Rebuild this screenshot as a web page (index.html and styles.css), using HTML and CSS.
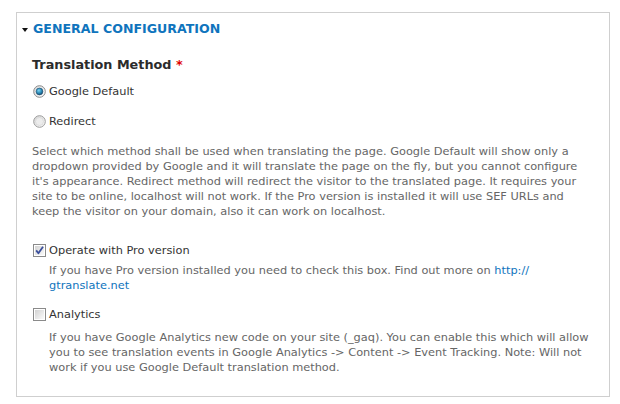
FILE: index.html
```html
<!DOCTYPE html>
<html lang="en">
<head>
<meta charset="utf-8">
<title>General configuration</title>
<link rel="stylesheet" href="styles.css">
</head>
<body>
<svg class="defs" width="0" height="0" aria-hidden="true">
  <defs>
    <linearGradient id="ringfill" x1="0" y1="0" x2="1" y2="1">
      <stop offset="0" stop-color="#d6d6d6"/>
      <stop offset="1" stop-color="#ffffff"/>
    </linearGradient>
    <radialGradient id="dotfill" cx="0.4" cy="0.35" r="0.7">
      <stop offset="0" stop-color="#7fd3f2"/>
      <stop offset="0.55" stop-color="#2a8cb8"/>
      <stop offset="1" stop-color="#14456a"/>
    </radialGradient>
    <linearGradient id="boxfill" x1="0" y1="0" x2="1" y2="1">
      <stop offset="0" stop-color="#d3d3d3"/>
      <stop offset="1" stop-color="#fafafa"/>
    </linearGradient>
  </defs>
</svg>

<div class="panel">
  <div class="panel-legend">
    <span class="arrow"></span><span class="legend-text">General configuration</span>
  </div>

  <div class="field-title">Translation Method <span class="required">*</span></div>

  <div class="option option-first">
    <svg class="radio" width="13" height="13" viewBox="0 0 13 13">
      <circle cx="6.5" cy="6.5" r="5.8" fill="url(#ringfill)" stroke="#8a8a8a" stroke-width="1"/>
      <circle cx="6.5" cy="6.5" r="3.4" fill="url(#dotfill)" stroke="#1e4c6e" stroke-width="0.6"/>
    </svg>
    <span class="option-label">Google Default</span>
  </div>

  <div class="option option-second">
    <svg class="radio" width="13" height="13" viewBox="0 0 13 13">
      <circle cx="6.5" cy="6.5" r="5.8" fill="url(#ringfill)" stroke="#9a9a9a" stroke-width="1"/>
      <circle cx="6.5" cy="6.5" r="4" fill="#ececec" stroke="#d0d0d0" stroke-width="0.6"/>
    </svg>
    <span class="option-label">Redirect</span>
  </div>

  <p class="description description-main">Select which method shall be used when translating the page. Google Default will show only a dropdown provided by Google and it will translate the page on the fly, but you cannot configure it's appearance. Redirect method will redirect the visitor to the translated page. It requires your site to be online, localhost will not work. If the Pro version is installed it will use SEF URLs and<br>keep the visitor on your domain, also it can work on localhost.</p>

  <div class="option option-check">
    <svg class="checkbox" width="13" height="13" viewBox="0 0 13 13">
      <rect x="0.5" y="0.5" width="12" height="12" fill="#fff" stroke="#8a8a8a"/>
      <rect x="2" y="2" width="9" height="9" fill="url(#boxfill)"/>
      <path d="M3.2 6.4 L5.4 9.2 L10 2.8" fill="none" stroke="#3a4f9c" stroke-width="1.8" stroke-linejoin="round"/>
    </svg>
    <span class="option-label">Operate with Pro version</span>
  </div>
  <p class="description description-sub description-pro">If you have Pro version installed you need to check this box. Find out more on <a href="#" class="link">http://<br>gtranslate.net</a></p>

  <div class="option option-analytics">
    <svg class="checkbox" width="13" height="13" viewBox="0 0 13 13">
      <rect x="0.5" y="0.5" width="12" height="12" fill="#fff" stroke="#8a8a8a"/>
      <rect x="2" y="2" width="9" height="9" fill="url(#boxfill)"/>
    </svg>
    <span class="option-label">Analytics</span>
  </div>
  <p class="description description-sub description-analytics">If you have Google Analytics new code on your site (_gaq). You can enable this which will allow you to see translation events in Google Analytics -&gt; Content -&gt; Event Tracking. Note: Will not work if you use Google Default translation method.</p>
</div>
</body>
</html>
```
FILE: styles.css
```css
html, body {
  margin: 0;
  padding: 0;
  background: #ffffff;
}
body {
  font-family: "DejaVu Sans", Verdana, sans-serif;
  font-size: 11.35px;
  color: #333333;
}
.defs {
  position: absolute;
  width: 0;
  height: 0;
  overflow: hidden;
}
.panel {
  box-sizing: border-box;
  width: 594px;
  height: 385px;
  margin: 12px 0 0 16px;
  border: 1px solid #cfcfcf;
  padding: 8px 13px 0 15px;
}
.panel-legend {
  display: flex;
  align-items: center;
  gap: 5px;
  height: 16px;
  margin-left: -10px;
}
.arrow {
  width: 0;
  height: 0;
  border-left: 3px solid transparent;
  border-right: 3px solid transparent;
  border-top: 4px solid #111;
  margin-top: 1px;
}
.legend-text {
  font-size: 12.6px;
  font-weight: bold;
  text-transform: uppercase;
  color: #0f74bd;
  line-height: 16px;
}
.field-title {
  margin-top: 20px;
  font-size: 12.8px;
  font-weight: bold;
  line-height: 16px;
  color: #2b2b2b;
}
.required {
  color: #e00000;
}
.option {
  display: flex;
  align-items: center;
  gap: 3px;
  line-height: 16px;
  color: #333;
}
.radio, .checkbox {
  flex: none;
  margin-left: 1px;
}
.option-first { margin-top: 10px; }
.option-second { margin-top: 14px; }
.option-check { margin-top: 23px; }
.option-analytics { margin-top: 13px; }
.description {
  margin: 0;
  line-height: 15px;
  color: #666666;
}
.description-main {
  margin-top: 15px;
}
.description-sub {
  padding-left: 17px;
}
.description-pro { margin-top: 5px; }
.description-analytics { margin-top: 8px; }
.link {
  color: #0f74bd;
  text-decoration: none;
}
```
